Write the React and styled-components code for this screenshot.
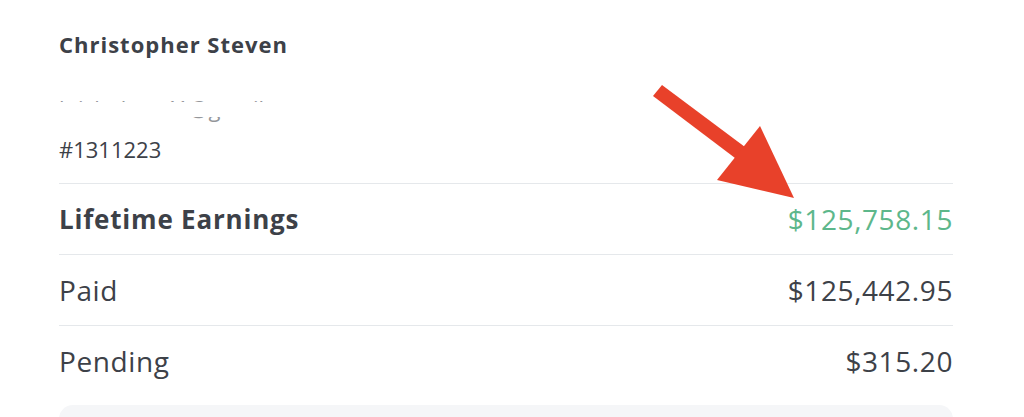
import styled, { createGlobalStyle } from "styled-components";

const GlobalStyle = createGlobalStyle`
  html, body {
    margin: 0;
    padding: 0;
    background: #ffffff;
  }
  body {
    font-family: "Open Sans", "Lato", sans-serif;
    color: #3d4148;
  }
`

const Page = styled.div`
  position: relative;
  width: 1024px;
  height: 417px;
  overflow: hidden;
  background: #fff;
`

const Card = styled.div`
  display: flex;
  flex-direction: column;
  margin: 0 71px 0 59px;
  padding-top: 30px;
`

const Header = styled.div`
  display: flex;
  flex-direction: column;
  padding-bottom: 20px;
  border-bottom: 1px solid #e5e8eb;
`

const Name = styled.div`
  font-size: 22px;
  line-height: 28px;
  font-weight: 700;
  letter-spacing: 1px;
  color: #3d4148;
`

const Email = styled.div`
  position: relative;
  margin-top: 38px;
  font-size: 22px;
  line-height: 24px;
  height: 24px;
  color: #3d4148;

  &::after {
    content: "";
    position: absolute;
    left: 0;
    right: 0;
    top: 6px;
    height: 15px;
    background: #fff;
  }
`

const Hidden = styled.span`
  opacity: 0.55;
`

const Ident = styled.div`
  margin-top: 15px;
  font-size: 22px;
  line-height: 28px;
  color: #3d4148;
`

const Row = styled.div`
  display: flex;
  align-items: center;
  justify-content: space-between;
  height: 70px;
  border-bottom: ${p => (p.$last ? "none" : "1px solid #e5e8eb")};
`

const Label = styled.span`
  font-size: ${p => (p.$bold ? "26px" : "28px")};
  font-weight: ${p => (p.$bold ? 700 : 400)};
  letter-spacing: ${p => (p.$bold ? "0.8px" : "0.6px")};
  color: #3d4148;
`

const Amount = styled.span`
  font-size: 28px;
  font-weight: 400;
  letter-spacing: 0.6px;
  color: ${p => (p.$green ? "#5db78b" : "#3d4148")};
`

const Panel = styled.div`
  margin-top: 9px;
  height: 60px;
  background: #f5f6f8;
  border-radius: 14px;
`

const Arrow = styled.svg`
  position: absolute;
  left: 0;
  top: 0;
  pointer-events: none;
`

const rows = [
  { label: "Lifetime Earnings", amount: "$125,758.15", bold: true, green: true },
  { label: "Paid", amount: "$125,442.95" },
  { label: "Pending", amount: "$315.20", last: true },
]

export default function App() {
  return (
    <Page>
      <GlobalStyle />
      <Card>
        <Header>
          <Name>Christopher Steven</Name>
          <Email><Hidden>lnicholson41@gmail.com</Hidden></Email>
          <Ident>#1311223</Ident>
        </Header>
        {rows.map(r => (
          <Row key={r.label} $last={r.last}>
            <Label $bold={r.bold}>{r.label}</Label>
            <Amount $green={r.green}>{r.amount}</Amount>
          </Row>
        ))}
        <Panel />
      </Card>
      <Arrow width="1024" height="417" viewBox="0 0 1024 417">
        <polygon points="662,85 653,96 739,161 749,150" fill="#e8412a" />
        <polygon points="717,180 760,126 794,198" fill="#e8412a" />
      </Arrow>
    </Page>
  )
}
